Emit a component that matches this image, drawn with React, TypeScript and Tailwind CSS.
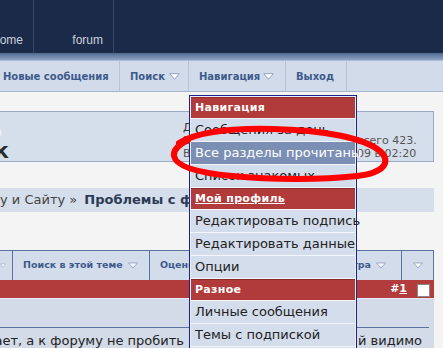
import React from "react";

const Tri = ({ w = 11, h = 7 }: { w?: number; h?: number }) => (
  <svg width={w} height={h} viewBox="0 0 11 7" className="inline-block">
    <polygon points="0.7,0.7 10.3,0.7 5.5,6.3" fill="#ffffff" stroke="#8ea0c2" strokeWidth="1" />
  </svg>
);

const MenuHeader = ({ children, underline = false }: { children: React.ReactNode; underline?: boolean }) => (
  <div className="h-[21px] bg-[#b13a3a] border-t border-t-[#8e2b2b] flex items-center pl-[4px] text-white font-bold text-[11px] tracking-[0.3px]">
    <span className={underline ? "underline" : ""}>{children}</span>
  </div>
);

const MenuItem = ({ children, active = false }: { children: React.ReactNode; active?: boolean }) => (
  <div
    className={
      "h-[22px] flex items-center pl-[4px] text-[13px] whitespace-nowrap " +
      (active ? "bg-[#7b8fb5] text-white" : "bg-[#d4ddeb] text-[#222222]")
    }
  >
    {children}
  </div>
);

const Sep = () => <div className="h-[1px] bg-[#f2f5fa]" />;

export default function App() {
  return (
    <div
      className="relative w-[443px] h-[348px] overflow-hidden bg-[#f4f4f4]"
      style={{ fontFamily: '"DejaVu Sans", Verdana, sans-serif' }}
    >
      {/* top header */}
      <div className="h-[53px] bg-[#1b2a48] flex" style={{ fontFamily: '"Liberation Sans", Arial, sans-serif' }}>
        <div className="w-[34px] border-r border-r-[#34476c] flex justify-end items-end pr-[10px] pb-[4px] text-[#c9d2df] text-[12px] whitespace-nowrap">
          home
        </div>
        <div className="w-[80px] border-r border-r-[#34476c] flex justify-end items-end pr-[10px] pb-[4px] text-[#c9d2df] text-[12px]">
          forum
        </div>
        <div className="flex-1" />
      </div>
      <div className="h-[7px] bg-gradient-to-b from-[#4f688f] to-[#8ea3c3]" />
      {/* nav bar */}
      <div className="h-[32px] bg-[#d2dbe9] border-t border-t-[#a9bcdb] border-b border-b-[#a6b5ce] flex text-[10px] font-bold text-[#3c5a8c] whitespace-nowrap">
        <div className="w-[120px] border-r border-r-[#b6c3d8] flex items-center pl-[3px]">Новые сообщения</div>
        <div className="w-[69px] border-r border-r-[#b6c3d8] flex items-center pl-[10px] gap-[4px]">
          Поиск <Tri />
        </div>
        <div className="w-[97px] border-r border-r-[#b6c3d8] flex items-center pl-[10px] gap-[3px]">
          Навигация <Tri />
        </div>
        <div className="w-[61px] border-r border-r-[#b6c3d8] flex items-center pl-[10px]">Выход</div>
      </div>

      {/* content column */}
      <div className="w-[434px]">
        <div className="h-[19px]" />
        {/* title panel */}
        <div className="h-[51px] bg-[#d5deeb] border-y border-r border-[#9aaac6] flex relative overflow-hidden">
          <div className="w-[183px] relative">
            <div className="absolute left-[-14px] top-[3px] text-[26px] font-bold text-[#eef2f8] leading-none">ь</div>
            <div className="absolute left-[-6px] top-[28px] text-[22px] font-bold text-[#2a2a2a] leading-none">к</div>
          </div>
          <div className="flex-1 pt-[9px] text-[11px] leading-[13px] text-[#555555] whitespace-nowrap">
            <div>
              <span className="underline text-[#333333]">Добро пожаловать</span>
            </div>
            <div className="flex">
              <span className="w-[174px] overflow-hidden">Ваше последнее посещение</span>
              <span>всего 423.</span>
            </div>
            <div className="flex">
              <span className="w-[174px] overflow-hidden">Вы последний раз</span>
              <span>09 в 02:20</span>
            </div>
          </div>
        </div>
        <div className="h-[26px]" />
        {/* breadcrumb */}
        <div className="h-[24px] bg-[#d5deeb] flex items-center text-[13px] whitespace-nowrap text-[#444444]">
          <span>у и Сайту »</span>
          <span className="font-bold text-[#2c3b55] ml-[7px]">Проблемы с форумом</span>
        </div>
        <div className="h-[38px]" />
        {/* toolbar */}
        <div className="h-[30px] bg-[#d3dcea] border-t border-r border-[#5b73a0] flex text-[9.5px] font-bold text-[#3c5a8c] whitespace-nowrap">
          <div className="w-[13px] border-r border-r-[#5b73a0] flex items-center justify-end pr-[6px]">
            <Tri w={10} h={7} />
          </div>
          <div className="w-[137px] border-r border-r-[#5b73a0] flex items-center pl-[10px] gap-[5px]">
            Поиск в этой теме <Tri w={10} h={7} />
          </div>
          <div className="w-[150px] border-r border-r-[#5b73a0] flex items-center pl-[10px]">Оценка темы</div>
          <div className="flex-1 border-r border-r-[#5b73a0] flex items-center justify-end pr-[15px] gap-[5px]">
            Параметра <Tri w={10} h={7} />
          </div>
          <div className="w-[31px] flex items-center justify-center">
            <Tri w={10} h={7} />
          </div>
        </div>
        {/* red bar */}
        <div className="h-[18px] bg-[#b23b3b] flex items-center justify-end pr-[4px] gap-[10px]">
          <span className="text-white font-bold text-[11px]">
            #<span className="underline">1</span>
          </span>
          <span className="w-[13px] h-[13px] bg-white border border-[#8a8a8a] mt-[2px]" />
        </div>
        <div className="h-[1px] bg-[#e6ebf3]" />
        {/* post area */}
        <div className="bg-[#d3dbe8] h-[60px]">
          <div className="h-[28px]" />
          <div className="h-[1px] bg-[#5b73a0] mr-[5px]" />
          <div className="flex text-[13px] text-[#222222] whitespace-nowrap pt-[3px]">
            <div className="w-[184px] flex justify-end">
              <span>работает, а к форуму не пробить</span>
            </div>
            <div className="w-[174px]" />
            <span>й видимо</span>
          </div>
        </div>
      </div>

      {/* dropdown menu */}
      <div className="absolute left-[189px] top-[95px] w-[168px] border border-[#1c2488] bg-[#e9eef6] p-[1px]">
        <MenuHeader>Навигация</MenuHeader>
        <Sep />
        <MenuItem>Сообщения за день</MenuItem>
        <Sep />
        <MenuItem active>Все разделы прочитаны</MenuItem>
        <Sep />
        <MenuItem>Список знакомых</MenuItem>
        <Sep />
        <MenuHeader underline>Мой профиль</MenuHeader>
        <Sep />
        <MenuItem>Редактировать подпись</MenuItem>
        <Sep />
        <MenuItem>Редактировать данные</MenuItem>
        <Sep />
        <MenuItem>Опции</MenuItem>
        <Sep />
        <MenuHeader>Разное</MenuHeader>
        <Sep />
        <MenuItem>Личные сообщения</MenuItem>
        <Sep />
        <MenuItem>Темы с подпиской</MenuItem>
        <Sep />
        <MenuItem>Кто на форуме</MenuItem>
      </div>

      {/* red freehand ellipse */}
      <svg className="absolute left-0 top-0 pointer-events-none" width="443" height="348" viewBox="0 0 443 348">
        <path
          d="M 179 143 C 196 133, 228 128, 272 129 C 324 130, 364 138, 380 151 C 392 162, 384 173, 357 176 C 322 180, 272 180, 232 176 C 200 173, 176 167, 174 156 C 173 150, 178 145, 188 140"
          fill="none"
          stroke="#ff0000"
          strokeWidth="6"
          strokeLinecap="round"
          strokeLinejoin="round"
        />
      </svg>
    </div>
  );
}
